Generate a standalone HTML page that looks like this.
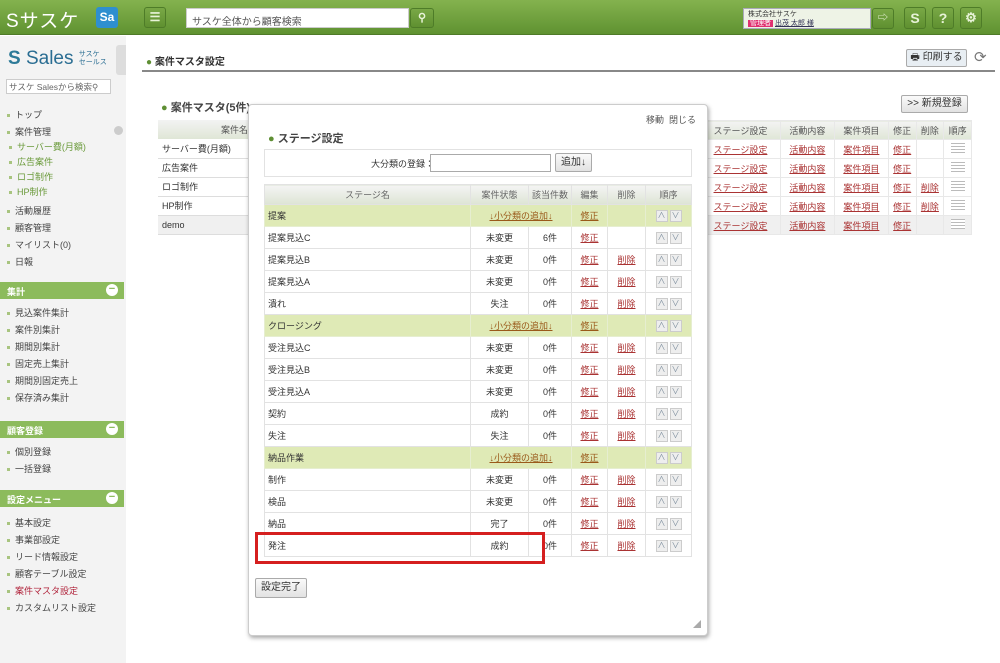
<!DOCTYPE html>
<html><head><meta charset="utf-8"><style>
*{margin:0;padding:0;box-sizing:border-box}
body{width:1000px;height:663px;overflow:hidden;background:#fff;font-family:"Liberation Sans","Noto Sans CJK JP",sans-serif;font-size:10px;color:#333;position:relative}
.a{position:absolute}
#hd{left:0;top:0;width:1000px;height:35px;background:linear-gradient(#84b24e,#5f9231);border-bottom:1px solid #4f7a28}
.ib{position:absolute;background:linear-gradient(#79a846,#5f9030);border:1px solid #4e7c28;border-radius:3px;color:#e8f3d8;text-align:center;font-weight:bold}
#sb{left:0;top:36px;width:126px;height:627px;background:#f3f3f3}
.li{position:absolute;left:7px;font-size:9px;color:#444;white-space:nowrap}
.li:before{content:"";display:inline-block;width:3px;height:3px;background:#a8c47f;margin-right:5px;vertical-align:middle}
.sub{left:9px;color:#6a9a3a}
.bar{position:absolute;left:0;width:124px;height:17px;background:#8cbb5c;color:#fff;font-size:9px;font-weight:bold;padding:3px 7px}
.bar:after{content:"−";position:absolute;right:6px;top:2px;width:12px;height:12px;border-radius:50%;background:#fff;color:#8cbb5c;font-size:11px;line-height:11px;text-align:center}
table{border-collapse:collapse;position:absolute}
td,th{font-weight:normal;font-size:9px;white-space:nowrap}
.lt td{border-bottom:1px solid #ddd;height:19px;padding-left:4px}
.lt th{background:linear-gradient(#f3f3f3,#dfe6d6);height:19px;color:#555;text-align:right;padding-right:2px}
.rt td{border:1px solid #e8e8e8;height:19px;text-align:center;color:#a33;text-decoration:underline}
.rt th{background:linear-gradient(#f3f3f3,#dfe6d6);height:19px;color:#555;border:1px solid #e8e8e8}
.hm{display:inline-block;width:14px;height:10px;background:repeating-linear-gradient(#bbb 0 1px,#fff 1px 3px);text-decoration:none}
#md{left:248px;top:104px;width:460px;height:532px;background:#fff;border:1px solid #ccc;border-radius:4px;box-shadow:1px 2px 4px rgba(0,0,0,.35)}
.st td,.st th{border:1px solid #e2e2e2;height:22px;text-align:center}
.st th{background:linear-gradient(#f4f4f4,#dde4d4);color:#666;height:20px}
.st td:first-child{text-align:left;padding-left:3px}
.st tr.g td{background:#dfeab6;border-color:#e6eed0}
.lk{color:#a33;text-decoration:underline}
.ok{color:#9a5a1a;text-decoration:underline}
.ar{display:inline-block;width:12px;height:12px;border:1px solid #ccc;background:#eee;color:#789;font-size:8px;line-height:10px;margin:0 1px;vertical-align:middle}
.btn{position:absolute;border:1px solid #aaa;border-radius:2px;background:linear-gradient(#fafafa,#e2e2e2);font-size:10px;color:#333;text-align:center}
</style></head><body>
<div id="hd" class="a">
 <div class="a" style="left:6px;top:6px;color:#fff;font-size:19px;letter-spacing:1px">Sサスケ</div>
 <div class="a" style="left:96px;top:7px;width:22px;height:21px;background:#2e8fd0;border-radius:3px;color:#fff;font-weight:bold;font-size:12px;text-align:center;line-height:21px">Sa</div>
 <div class="ib" style="left:144px;top:7px;width:22px;height:21px;font-size:12px;line-height:19px">☰</div>
 <div class="a" style="left:186px;top:8px;width:223px;height:20px;background:#fff;border:1px solid #ccc;font-size:10px;color:#555;padding:4px 5px">サスケ全体から顧客検索</div>
 <div class="ib" style="left:410px;top:8px;width:24px;height:20px;font-size:11px;line-height:18px">⚲</div>
 <div class="a" style="left:743px;top:8px;width:128px;height:21px;background:#eef3e6;border:1px solid #aab;font-size:7px;padding:1px 4px;line-height:9px">株式会社サスケ<br><span style="background:#e03070;color:#fff;padding:0 2px">管理者</span> <span style="color:#335;text-decoration:underline">出茂 太郎 様</span></div>
 <div class="ib" style="left:872px;top:8px;width:22px;height:21px;font-size:10px">⇨</div>
 <div class="ib" style="left:904px;top:7px;width:22px;height:22px;font-size:14px;line-height:20px">S</div>
 <div class="ib" style="left:932px;top:7px;width:22px;height:22px;font-size:14px;line-height:20px">?</div>
 <div class="ib" style="left:960px;top:7px;width:22px;height:22px;font-size:13px;line-height:20px">⚙</div>
</div>
<div id="sb" class="a">
 <div class="a" style="left:8px;top:12px;font-size:19px;color:#2a6d92"><span style="color:#2d7a98;font-weight:bold">S</span> Sales <span style="font-size:7px;display:inline-block;line-height:8px;vertical-align:middle">サスケ<br>セールス</span></div>
 <div class="a" style="left:116px;top:9px;width:10px;height:30px;background:#ddd;border-radius:3px 0 0 3px"></div>
 <div class="a" style="left:6px;top:43px;width:105px;height:15px;background:#fff;border:1px solid #ccc;font-size:8.5px;padding:1px 2px;color:#666">サスケ Salesから検索⚲</div>
</div>
<div class="li" style="top:108px">トップ</div>
<div class="li" style="top:125px">案件管理</div>
<div class="a" style="left:114px;top:126px;width:9px;height:9px;border-radius:50%;background:#ccc"></div>
<div class="li sub" style="top:140px">サーバー費(月額)</div>
<div class="li sub" style="top:155px">広告案件</div>
<div class="li sub" style="top:170px">ロゴ制作</div>
<div class="li sub" style="top:185px">HP制作</div>
<div class="li" style="top:204px">活動履歴</div>
<div class="li" style="top:221px">顧客管理</div>
<div class="li" style="top:238px">マイリスト(0)</div>
<div class="li" style="top:255px">日報</div>
<div class="bar" style="top:282px">集計</div>
<div class="li" style="top:306px">見込案件集計</div>
<div class="li" style="top:323px">案件別集計</div>
<div class="li" style="top:340px">期間別集計</div>
<div class="li" style="top:357px">固定売上集計</div>
<div class="li" style="top:374px">期間別固定売上</div>
<div class="li" style="top:391px">保存済み集計</div>
<div class="bar" style="top:421px">顧客登録</div>
<div class="li" style="top:445px">個別登録</div>
<div class="li" style="top:462px">一括登録</div>
<div class="bar" style="top:490px">設定メニュー</div>
<div class="li" style="top:516px">基本設定</div>
<div class="li" style="top:533px">事業部設定</div>
<div class="li" style="top:550px">リード情報設定</div>
<div class="li" style="top:567px">顧客テーブル設定</div>
<div class="li" style="top:584px;color:#b0223a">案件マスタ設定</div>
<div class="li" style="top:601px">カスタムリスト設定</div>

<div class="a" style="left:146px;top:53px;font-size:10px;font-weight:bold;color:#333"><span style="color:#5f8f34">●</span> 案件マスタ設定</div>
<div class="a" style="left:142px;top:70px;width:853px;height:2px;background:#888"></div>
<div class="btn" style="left:906px;top:49px;width:61px;height:18px;line-height:16px;background:#e8eef3">🖶 印刷する</div>
<div class="a" style="left:974px;top:48px;font-size:15px;color:#777">⟳</div>
<div class="a" style="left:161px;top:99px;font-size:11px;font-weight:bold;color:#444"><span style="color:#5f8f34">●</span> 案件マスタ(5件)</div>
<div class="btn" style="left:901px;top:95px;width:67px;height:18px;line-height:16px">&gt;&gt; 新規登録</div>
<table class="lt" style="left:158px;top:120px;width:92px"><tr><th>案件名</th></tr><tr><td>サーバー費(月額)</td></tr><tr><td>広告案件</td></tr><tr><td>ロゴ制作</td></tr><tr><td>HP制作</td></tr><tr><td style="background:#f0f0f0">demo</td></tr></table>
<table class="rt" style="left:700px;top:120px;width:272px">
<tr><th>ステージ設定</th><th>活動内容</th><th>案件項目</th><th>修正</th><th>削除</th><th>順序</th></tr>
<tr><td>ステージ設定</td><td>活動内容</td><td>案件項目</td><td>修正</td><td></td><td><span class="hm"></span></td></tr>
<tr><td>ステージ設定</td><td>活動内容</td><td>案件項目</td><td>修正</td><td></td><td><span class="hm"></span></td></tr>
<tr><td>ステージ設定</td><td>活動内容</td><td>案件項目</td><td>修正</td><td>削除</td><td><span class="hm"></span></td></tr>
<tr><td>ステージ設定</td><td>活動内容</td><td>案件項目</td><td>修正</td><td>削除</td><td><span class="hm"></span></td></tr>
<tr style="background:#f0f0f0"><td>ステージ設定</td><td>活動内容</td><td>案件項目</td><td>修正</td><td></td><td><span class="hm"></span></td></tr>
</table>

<div id="md" class="a">
 <div class="a" style="left:397px;top:8px;font-size:9px;color:#555">移動 &nbsp;閉じる</div>
 <div class="a" style="left:19px;top:25px;font-size:11px;font-weight:bold;color:#444"><span style="color:#5f8f34">●</span> ステージ設定</div>
 <div class="a" style="left:15px;top:44px;width:428px;height:28px;border:1px solid #e2e2e2"></div>
 <div class="a" style="left:122px;top:52px;font-size:9px">大分類の登録：</div>
 <div class="a" style="left:181px;top:49px;width:121px;height:18px;border:1px solid #aaa"></div>
 <div class="btn" style="left:306px;top:48px;width:37px;height:19px;line-height:17px">追加↓</div>
 <table class="st" style="left:15px;top:79px;width:428px">
 <tr><th style="width:206px">ステージ名</th><th style="width:58px">案件状態</th><th style="width:43px">該当件数</th><th style="width:36px">編集</th><th style="width:38px">削除</th><th>順序</th></tr>
 <tr class="g"><td>提案</td><td colspan="2"><span class="ok">↓小分類の追加↓</span></td><td><span class="ok">修正</span></td><td></td><td><span class="ar">∧</span><span class="ar">∨</span></td></tr>
 <tr><td>提案見込C</td><td>未変更</td><td>6件</td><td><span class="lk">修正</span></td><td></td><td><span class="ar">∧</span><span class="ar">∨</span></td></tr>
 <tr><td>提案見込B</td><td>未変更</td><td>0件</td><td><span class="lk">修正</span></td><td><span class="lk">削除</span></td><td><span class="ar">∧</span><span class="ar">∨</span></td></tr>
 <tr><td>提案見込A</td><td>未変更</td><td>0件</td><td><span class="lk">修正</span></td><td><span class="lk">削除</span></td><td><span class="ar">∧</span><span class="ar">∨</span></td></tr>
 <tr><td>潰れ</td><td>失注</td><td>0件</td><td><span class="lk">修正</span></td><td><span class="lk">削除</span></td><td><span class="ar">∧</span><span class="ar">∨</span></td></tr>
 <tr class="g"><td>クロージング</td><td colspan="2"><span class="ok">↓小分類の追加↓</span></td><td><span class="ok">修正</span></td><td></td><td><span class="ar">∧</span><span class="ar">∨</span></td></tr>
 <tr><td>受注見込C</td><td>未変更</td><td>0件</td><td><span class="lk">修正</span></td><td><span class="lk">削除</span></td><td><span class="ar">∧</span><span class="ar">∨</span></td></tr>
 <tr><td>受注見込B</td><td>未変更</td><td>0件</td><td><span class="lk">修正</span></td><td><span class="lk">削除</span></td><td><span class="ar">∧</span><span class="ar">∨</span></td></tr>
 <tr><td>受注見込A</td><td>未変更</td><td>0件</td><td><span class="lk">修正</span></td><td><span class="lk">削除</span></td><td><span class="ar">∧</span><span class="ar">∨</span></td></tr>
 <tr><td>契約</td><td>成約</td><td>0件</td><td><span class="lk">修正</span></td><td><span class="lk">削除</span></td><td><span class="ar">∧</span><span class="ar">∨</span></td></tr>
 <tr><td>失注</td><td>失注</td><td>0件</td><td><span class="lk">修正</span></td><td><span class="lk">削除</span></td><td><span class="ar">∧</span><span class="ar">∨</span></td></tr>
 <tr class="g"><td>納品作業</td><td colspan="2"><span class="ok">↓小分類の追加↓</span></td><td><span class="ok">修正</span></td><td></td><td><span class="ar">∧</span><span class="ar">∨</span></td></tr>
 <tr><td>制作</td><td>未変更</td><td>0件</td><td><span class="lk">修正</span></td><td><span class="lk">削除</span></td><td><span class="ar">∧</span><span class="ar">∨</span></td></tr>
 <tr><td>検品</td><td>未変更</td><td>0件</td><td><span class="lk">修正</span></td><td><span class="lk">削除</span></td><td><span class="ar">∧</span><span class="ar">∨</span></td></tr>
 <tr><td>納品</td><td>完了</td><td>0件</td><td><span class="lk">修正</span></td><td><span class="lk">削除</span></td><td><span class="ar">∧</span><span class="ar">∨</span></td></tr>
 <tr><td>発注</td><td>成約</td><td>0件</td><td><span class="lk">修正</span></td><td><span class="lk">削除</span></td><td><span class="ar">∧</span><span class="ar">∨</span></td></tr>
 </table>
 <div class="a" style="left:6px;top:427px;width:290px;height:32px;border:3px solid #d51f1f"></div>
 <div class="btn" style="left:6px;top:473px;width:52px;height:20px;line-height:18px">設定完了</div>
 <div class="a" style="left:444px;top:514px;font-size:8px;color:#aaa">◢</div>
</div>
</body></html>
